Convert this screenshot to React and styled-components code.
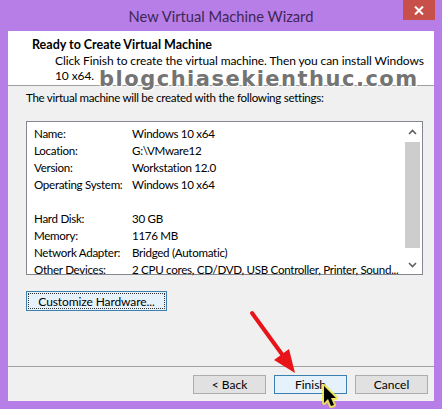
import React from "react";
import styled, { createGlobalStyle } from "styled-components";

const Global = createGlobalStyle`
  html, body { margin: 0; padding: 0; }
  body { width: 442px; height: 409px; overflow: hidden; font-family: Lato, "Noto Sans", sans-serif; }
`;

const Window = styled.div`
  position: relative;
  width: 442px;
  height: 409px;
  box-sizing: border-box;
  background: #b67ee6;
  padding: 0 8px 8px 8px;
  display: flex;
  flex-direction: column;
  font-family: Lato, "Noto Sans", sans-serif;
`;

const TitleBar = styled.div`
  height: 31px;
  display: flex;
  align-items: center;
  justify-content: center;
  position: relative;
`;

const Title = styled.div`
  font-size: 14.7px;
  color: #3f2657;
  margin-top: 1px;
`;

const CloseButton = styled.div`
  position: absolute;
  right: -1px;
  top: 0;
  width: 32px;
  height: 20px;
  background: #c8504b;
  color: #fff;
  display: flex;
  align-items: center;
  justify-content: center;
`;

const Client = styled.div`
  flex: 1;
  background: #f0f0f0;
  display: flex;
  flex-direction: column;
`;

const Header = styled.div`
  height: 55px;
  background: #fff;
  border-bottom: 1px solid #a0a0a0;
  box-sizing: border-box;
  padding: 6px 0 0 24px;
  font-size: 12px;
  color: #000;
  letter-spacing: -0.1px;
`;

const HeaderTitle = styled.div`
  font-weight: 700;
  line-height: 16px;
  font-size: 12.5px;
  letter-spacing: 0;
`;

const HeaderText = styled.div`
  padding-left: 23px;
  line-height: 15px;
`;

const Body = styled.div`
  flex: 1;
  padding: 4px 10px 0 18px;
  font-size: 11.6px;
  letter-spacing: -0.3px;
  color: #000;
`;

const Intro = styled.div`
  line-height: 16px;
  margin-bottom: 15px;
`;

const ListBox = styled.div`
  width: 397px;
  height: 154px;
  box-sizing: border-box;
  border: 1px solid #828790;
  background: #fff;
  display: flex;
  padding: 3px 1px 0 7px;
`;

const Rows = styled.div`
  flex: 1;
  display: grid;
  grid-template-columns: 98px 1fr;
  grid-auto-rows: 17px;
  align-items: center;
`;

const Label = styled.div`
  white-space: nowrap;
`;

const Value = styled.div`
  white-space: nowrap;
  overflow: hidden;
`;

const Scrollbar = styled.div`
  width: 17px;
  display: flex;
  flex-direction: column;
  align-items: center;
  margin-top: -2px;
  margin-bottom: 1px;
`;

const ScrollArrow = styled.div`
  height: 17px;
  width: 17px;
  display: flex;
  align-items: center;
  justify-content: center;
`;

const Track = styled.div`
  flex: 1;
  width: 15px;
  display: flex;
  flex-direction: column;
`;

const Thumb = styled.div`
  height: 106px;
  margin-top: 2px;
  background: #cdcdcd;
`;

const CustomButton = styled.div`
  margin-top: 16px;
  width: 141px;
  height: 20px;
  box-sizing: border-box;
  border: 1px solid #3c7fb1;
  background: #e5f1fb;
  padding: 1px;
  display: flex;
`;

const FocusRect = styled.div`
  flex: 1;
  border: 1px dotted #333;
  display: flex;
  align-items: center;
  justify-content: center;
  font-size: 12px;
  letter-spacing: -0.1px;
`;

const Footer = styled.div`
  height: 35px;
  border-top: 1px solid #a0a0a0;
  box-sizing: border-box;
  display: flex;
  justify-content: flex-end;
  align-items: flex-start;
  gap: 8px;
  padding: 8px 6px 0 0;
`;

const Button = styled.div`
  width: 73px;
  height: 19px;
  box-sizing: border-box;
  border: 1px solid ${(p) => (p.$default ? "#3c7fb1" : "#adadad")};
  background: ${(p) => (p.$default ? "#e5f1fb" : "#e1e1e1")};
  font-size: 12px;
  display: flex;
  align-items: center;
  justify-content: center;
  color: #000;
`;

const Watermark = styled.div`
  position: absolute;
  left: 99px;
  top: 67px;
  font-family: "DejaVu Sans", sans-serif;
  font-weight: 700;
  font-size: 21px;
  letter-spacing: 1.5px;
  color: #747474;
  text-shadow: 1px 0 0 #fff, -1px 0 0 #fff, 0 1px 0 #fff, 0 -1px 0 #fff, 1px 1px 0 #fff, -1px -1px 0 #fff;
  pointer-events: none;
`;

const Overlay = styled.svg`
  position: absolute;
  left: 0;
  top: 0;
  pointer-events: none;
`;

const rows = [
  ["Name:", "Windows 10 x64"],
  ["Location:", "G:\\VMware12"],
  ["Version:", "Workstation 12.0"],
  ["Operating System:", "Windows 10 x64"],
  ["", ""],
  ["Hard Disk:", "30 GB"],
  ["Memory:", "1176 MB"],
  ["Network Adapter:", "Bridged (Automatic)"],
  ["Other Devices:", "2 CPU cores, CD/DVD, USB Controller, Printer, Sound..."],
];

export default function App() {
  return (
    <>
      <Global />
      <Window>
        <TitleBar>
          <Title>New Virtual Machine Wizard</Title>
          <CloseButton>
            <svg width="10" height="9" viewBox="0 0 10 9">
              <path d="M1 0.5 L9 8.5 M9 0.5 L1 8.5" stroke="#fff" strokeWidth="2" />
            </svg>
          </CloseButton>
        </TitleBar>
        <Client>
          <Header>
            <HeaderTitle>Ready to Create Virtual Machine</HeaderTitle>
            <HeaderText>
              Click Finish to create the virtual machine. Then you can install Windows
              <br />
              10 x64.
            </HeaderText>
          </Header>
          <Body>
            <Intro>The virtual machine will be created with the following settings:</Intro>
            <ListBox>
              <Rows>
                {rows.map(([l, v], i) => (
                  <React.Fragment key={i}>
                    <Label>{l}</Label>
                    <Value>{v}</Value>
                  </React.Fragment>
                ))}
              </Rows>
              <Scrollbar>
                <ScrollArrow>
                  <svg width="9" height="6" viewBox="0 0 9 6">
                    <path d="M1 5 L4.5 1.5 L8 5" stroke="#606060" strokeWidth="1.6" fill="none" />
                  </svg>
                </ScrollArrow>
                <Track>
                  <Thumb />
                </Track>
                <ScrollArrow>
                  <svg width="9" height="6" viewBox="0 0 9 6">
                    <path d="M1 1 L4.5 4.5 L8 1" stroke="#606060" strokeWidth="1.6" fill="none" />
                  </svg>
                </ScrollArrow>
              </Scrollbar>
            </ListBox>
            <CustomButton>
              <FocusRect>Customize Hardware...</FocusRect>
            </CustomButton>
          </Body>
          <Footer>
            <Button>&lt; Back</Button>
            <Button $default>Finish</Button>
            <Button>Cancel</Button>
          </Footer>
        </Client>
        <Watermark>blogchiasekienthuc.com</Watermark>
        <Overlay width="442" height="409" viewBox="0 0 442 409">
          <line x1="252" y1="313" x2="284" y2="357" stroke="#e8141a" strokeWidth="4" strokeLinecap="round" />
          <polygon points="295,373 274,360 289,349" fill="#e8141a" />
          <g transform="translate(324,386)">
            <path d="M0 0 L0 17 L4 13 L7 20 L10 19 L7 12 L12 12 Z" fill="#f2e84a" stroke="#f2e84a" strokeWidth="4" strokeLinejoin="round" opacity="0.85" />
            <path d="M0 0 L0 17 L4 13 L7 20 L10 19 L7 12 L12 12 Z" fill="#000" />
          </g>
        </Overlay>
      </Window>
    </>
  );
}
